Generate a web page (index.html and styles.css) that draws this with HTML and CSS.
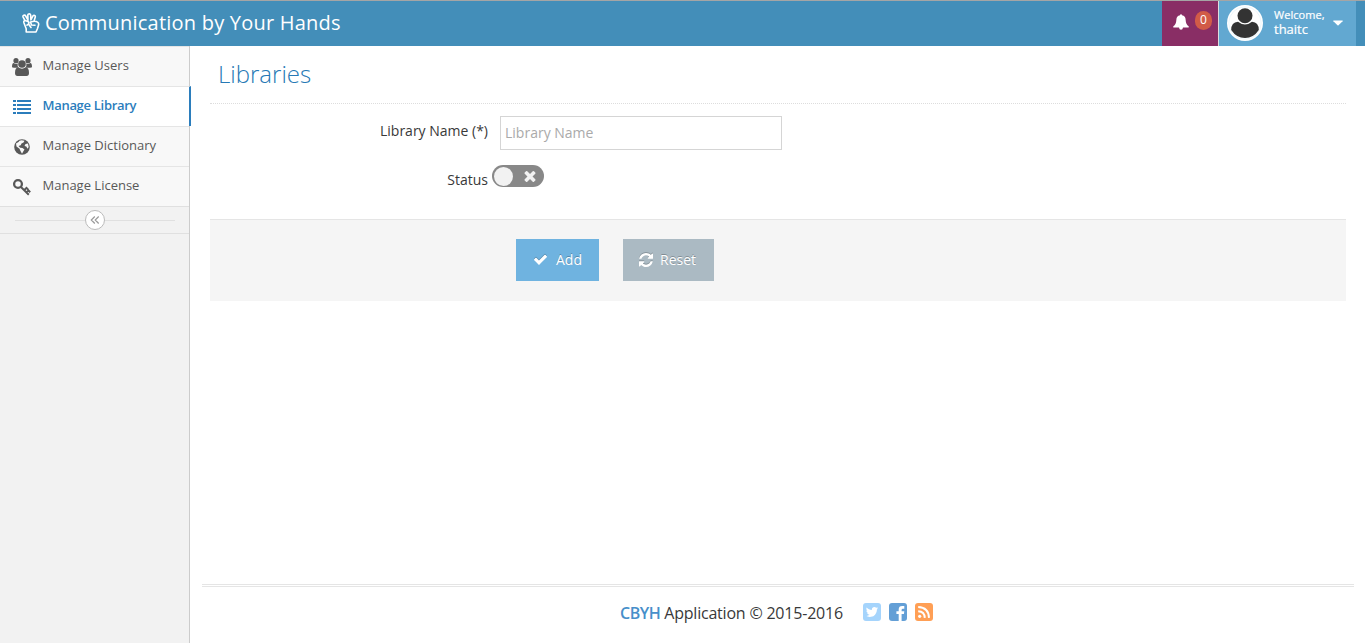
FILE: index.html
```html
<!DOCTYPE html>
<html lang="en">
<head>
<meta charset="utf-8">
<title>Communication by Your Hands</title>
<link rel="stylesheet" href="styles.css">
</head>
<body>
<header class="navbar">
  <div class="brand">
    <svg class="brand-icon" viewBox="0 0 18 20" fill="none" stroke="#fff" stroke-width="1.600" stroke-linejoin="round" stroke-linecap="round"><path d="M4.200 19V15.700L2 10Q1.300 8 3 7.500L1.100 4.100Q.6 2.700 1.800 2.200Q3 1.800 3.700 3L6 7.200L5.800 2Q6 .8 7.400.8Q8.700.9 8.700 2.200L8.900 7L10.900 3Q11.600 2 12.600 2.400Q13.600 2.900 13.200 4.200L12 8.300Q14.500 8.200 16 9.500Q17 10.500 16.500 12.200L15.500 15.500L14 19ZM3 7.500L6 8.500Q7.500 9.500 6.500 11L5 12.200M12 8.300L8.500 9L9.500 12L13 12.300M6.500 11L9 14.500"/></svg>
    <span>Communication by Your Hands</span>
  </div>
  <div class="tools">
    <div class="alerts">
      <svg class="bell" viewBox="0 0 16 16" fill="#fff"><path d="M8 .2Q9 .2 9 1.300Q12.600 2 12.600 5.500Q12.800 10.500 15.700 12.300V13.400H10Q9.700 15.700 8 15.700Q6.300 15.700 6 13.400H.3V12.300Q3.200 10.500 3.400 5.500Q3.400 2 7 1.300Q7 .2 8 .2Z"/></svg>
      <span class="badge">0</span>
    </div>
    <div class="user">
      <svg class="avatar" viewBox="0 0 36 36"><circle cx="18" cy="18" r="18" fill="#fff"/><circle cx="18" cy="18" r="16.200" fill="none" stroke="#d9edf7" stroke-width=".5"/><circle cx="18" cy="10.700" r="7.500" fill="#333"/><path d="M4.200 25Q4.200 17 11 16.700Q18 22.300 25 16.700Q31.800 17 31.800 25Q26.500 33 18 33Q9.500 33 4.200 25Z" fill="#333"/></svg>
      <span class="welcome"><small>Welcome,</small>thaitc</span>
      <svg class="caret" viewBox="0 0 10 6" fill="#fff"><path d="M.5.500H9.500Q10 .7 9.600 1.200L5.500 5.300Q5 5.700 4.500 5.300L.4 1.200Q0 .7.500.5Z"/></svg>
    </div>
  </div>
</header>
<div class="body">
  <nav class="sidebar">
    <a class="item"><svg viewBox="0 0 20 18" fill="currentColor"><circle cx="4" cy="2.700" r="2.600"/><circle cx="16" cy="2.700" r="2.600"/><path d="M0 9Q0 5 1.700 5Q4 6.500 5.700 5.500Q5.200 8 6.500 9.700H2Q0 9.700 0 9ZM20 9Q20 5 18.300 5Q16 6.500 14.300 5.500Q14.800 8 13.500 9.700H18Q20 9.700 20 9Z"/><circle cx="10" cy="6" r="3.800"/><path d="M3 15Q3 9.500 6.300 9.300Q10 12 13.700 9.300Q17 9.500 17 15Q17 18 14.500 18H5.500Q3 18 3 15Z"/></svg><span>Manage Users</span></a>
    <a class="item active"><svg viewBox="0 0 20 18" fill="currentColor"><path d="M1 2h3v2H1zM5 2h14v2H5zM1 6h3v2H1zM5 6h14v2H5zM1 10h3v2H1zM5 10h14v2H5zM1 14h3v2H1zM5 14h14v2H5z"/></svg><span>Manage Library</span></a>
    <a class="item"><svg viewBox="0 0 20 18"><circle cx="10" cy="9" r="7.800" fill="#585858"/><path d="M9.500 2.300L12.500 2.700L11.500 4.500L9.500 5.500L8.700 7.300L6.500 8L8.200 9.700L10.500 10L12.500 11.500L11.500 13L10 15.800L8.500 13L7.500 10.700L4.500 8.500L4 5.500L6.500 4L7.500 2.800ZM13.500 6L16 5.500L16.700 9L15.500 10.800L14.300 8.500L12.500 8Z" fill="#f8f8f8"/></svg><span>Manage Dictionary</span></a>
    <a class="item"><svg viewBox="0 0 20 18" fill="none" stroke="currentColor"><circle cx="6" cy="6" r="3.900" stroke-width="2.300"/><path d="M8.700 8.800L16.800 16.700M12.200 12.200L14.500 9.900L16.200 11.600M14.500 14.500L16.500 12.500L18.200 14.200" stroke-width="2"/></svg><span>Manage License</span></a>
    <div class="collapse"><span class="collapse-button"><svg viewBox="0 0 10 10" fill="none" stroke="#999" stroke-width="1.200"><path d="M4.800 1.500L1.300 5L4.800 8.500M8.700 1.500L5.200 5L8.700 8.500"/></svg></span></div>
  </nav>
  <main class="main">
    <h1 class="title">Libraries</h1>
    <form class="form">
      <div class="row name-row">
        <label class="label" for="name">Library Name (*)</label>
        <input class="field" id="name" type="text" placeholder="Library Name">
      </div>
      <div class="row status-row">
        <span class="label">Status</span>
        <span class="switch"><span class="knob"></span><svg viewBox="250 250 1292 1292" fill="#f2f2f2"><path d="M1490 1322q0 40-28 68l-136 136q-28 28-68 28t-68-28l-294-294-294 294q-28 28-68 28t-68-28l-136-136q-28-28-28-68t28-68l294-294-294-294q-28-28-28-68t28-68l136-136q28-28 68-28t68 28l294 294 294-294q28-28 68-28t68 28l136 136q28 28 28 68t-28 68l-294 294 294 294q28 28 28 68z"/></svg></span>
      </div>
      <div class="actions">
        <button class="button add" type="button"><svg viewBox="0 0 1792 1792" fill="#fff"><path d="M1671 566q0 40-28 68l-724 724-136 136q-28 28-68 28t-68-28l-136-136-362-362q-28-28-28-68t28-68l136-136q28-28 68-28t68 28l294 295 656-657q28-28 68-28t68 28l136 136q28 28 28 68z"/></svg><span>Add</span></button>
        <button class="button reset" type="button"><svg viewBox="128 128 1536 1536" fill="#fff"><path d="M1639 1056q0 5-1 7-64 268-268 434.500t-478 166.500q-146 0-282.500-55t-243.500-157l-129 129q-19 19-45 19t-45-19-19-45v-448q0-26 19-45t45-19h448q26 0 45 19t19 45-19 45l-137 137q71 66 161 102t187 36q134 0 250-65t186-179q11-17 53-117 8-23 30-23h192q13 0 22.500 9.500t9.500 22.500zm25-800v448q0 26-19 45t-45 19h-448q-26 0-45-19t-19-45 19-45l138-138q-148-137-349-137-134 0-250 65t-186 179q-11 17-53 117-8 23-30 23h-199q-13 0-22.500-9.500t-9.500-22.500v-7q65-268 270-434.500t480-166.500q146 0 284 55.500t245 156.500l130-129q19-19 45-19t45 19 19 45z"/></svg><span>Reset</span></button>
      </div>
    </form>
    <footer class="footer">
      <span class="copyright"><b>CBYH</b> Application © 2015-2016</span>
      <span class="social">
        <svg viewBox="0 0 18 18"><rect width="18" height="18" rx="3" fill="#a5d4fc"/><path transform="translate(2 2) scale(.0078)" fill="#fff" d="M1684 408q-67 98-162 167 1 14 1 42 0 130-38 259.500t-115.500 248.500-184.500 210.500-258 146-323 54.500q-271 0-496-145 35 4 78 4 225 0 401-138-105-2-188-64.500t-114-159.500q33 5 61 5 43 0 85-11-112-23-185.500-111.500t-73.500-205.500v-4q68 38 146 41-66-44-105-115t-39-154q0-88 44-163 121 149 294.500 238.500t371.500 99.500q-8-38-8-74 0-134 94.500-228.500t228.500-94.500q140 0 236 102 109-21 205-78-37 115-142 178 93-10 186-50z"/></svg>
        <svg viewBox="0 0 18 18"><rect width="18" height="18" rx="3" fill="#639fd6"/><path fill="#fff" d="M9.700 18V11H7.400V8.200H9.700V6.300Q9.700 2.900 13.100 2.900H15.300V5.700H13.900Q12.600 5.700 12.600 7V8.200H15.300L14.900 11H12.600V18Z"/></svg>
        <svg viewBox="0 0 18 18"><rect width="18" height="18" rx="3" fill="#ff9f55"/><circle cx="4.700" cy="13.300" r="1.600" fill="#fff"/><path d="M3.200 8.200Q9.600 8.500 9.800 14.900M3.200 4Q13.600 4.400 14 14.900" fill="none" stroke="#fff" stroke-width="2"/></svg>
      </span>
    </footer>
  </main>
</div>
</body>
</html>
```
FILE: styles.css
```css
* { box-sizing: border-box; }
body { margin: 0; height: 643px; display: flex; flex-direction: column; overflow: hidden; background: #fff; color: #393939; font: 13px/20px "Open Sans", sans-serif; }
svg { display: block; flex: none; }
.navbar { height: 46px; flex: none; display: flex; justify-content: space-between; background: #438eb9; border-top: 1px solid #a5a5a5; padding: 0 9px 0 22px; color: #fff; }
.brand { display: flex; align-items: center; gap: 5px; font-size: 20px; line-height: 20px; letter-spacing: .22px; white-space: nowrap; height: 43px; }
.brand-icon { width: 18px; height: 20px; }
.tools { display: flex; }
.alerts { width: 56px; background: #892e65; display: flex; padding: 10px 0 0 11px; }
.bell { width: 16px; height: 16px; margin-top: 3px; }
.badge { margin-left: 6px; width: 17px; height: 19px; border-radius: 9px; background: #d15b47; font-size: 12px; line-height: 18px; text-align: center; }
.user { width: 138px; border-left: 1px solid #ddd; background: #62a8d1; display: flex; align-items: flex-start; padding: 4px 0 0 8px; }
.avatar { width: 36px; height: 36px; }
.welcome { width: 60px; margin: 3px 0 0 11px; line-height: 15px; font-size: 13px; -webkit-text-stroke: .2px #fff; }
.welcome small { display: block; font-size: 11px; line-height: 14px; letter-spacing: .05px; }
.caret { width: 10px; height: 6px; margin-top: 15px; margin-left: -1px; }
.body { flex: 1; display: flex; min-height: 0; }
.sidebar { width: 190px; flex: none; background: #f2f2f2; border-right: 1px solid #ccc; }
.item { height: 40px; display: flex; align-items: center; gap: 11px; padding-left: 12px; background: #f8f8f8; border-top: 1px solid #e5e5e5; color: #585858; }
.item svg { width: 20px; height: 18px; }
.item span { margin: -3px 0 0 -.5px; }
.item.active { margin-right: -2px; border-right: 2px solid #2b7dbc; background: #fff; color: #2b7dbc; font-weight: 600; letter-spacing: -.3px; }
.collapse { height: 28px; border: solid #e0e0e0; border-width: 1px 0; display: flex; align-items: center; justify-content: center; }
.collapse::before, .collapse::after { content: ""; width: 70px; height: 1px; background: #e0e0e0; }
.collapse-button { width: 20px; height: 20px; border: 1px solid #bbb; border-radius: 50%; background: #fff; display: flex; align-items: center; justify-content: center; }
.collapse-button svg { width: 10px; height: 10px; }
.main { flex: 1; display: flex; flex-direction: column; padding: 0 11px 0 12px; }
.title { margin: 0 8px; height: 58px; padding: 13px 8px 0; border-bottom: 1px dotted #ddd; font-size: 24px; line-height: 29px; font-weight: 300; color: #2679b5; }
.form { margin: 0 8px; font-size: 14px; }
.row { display: flex; }
.label { width: 278px; text-align: right; }
.name-row { height: 61px; padding-top: 12px; gap: 12px; }
.name-row .label { padding-top: 5px; }
.field { width: 282px; height: 34px; border: 1px solid #d5d5d5; padding: 4px 4px 6px; font: 14px "Open Sans", sans-serif; }
.field::placeholder { color: #aaa; }
.status-row { height: 54px; gap: 4px; }
.status-row .label { padding-top: 5px; }
.switch { width: 52px; height: 22px; border-radius: 11px; background: #888; display: flex; align-items: center; gap: 11px; padding-left: 2px; }
.knob { width: 19px; height: 19px; border-radius: 50%; background: #f2f2f2; }
.switch svg { width: 12px; height: 12px; }
.actions { height: 82px; background: #f5f5f5; border-top: 1px solid #e5e5e5; display: flex; gap: 24px; padding: 19px 0 0 306px; }
.button { height: 42px; border: 0; display: flex; align-items: center; justify-content: center; gap: 7px; color: #fff; font: 14px/20px "Open Sans", sans-serif; text-shadow: 0 -1px 0 rgba(0,0,0,.25); padding: 0; }
.button svg { width: 15px; height: 15px; filter: drop-shadow(0 -1px 0 rgba(0,0,0,.2)); }
.add { width: 83px; gap: 8px; background: #6fb3e0; }
.add svg { margin-top: -1px; }
.reset { width: 91px; background: #abbac3; padding-right: 2px; }
.reset svg { width: 14px; height: 14px; }
.footer { margin-top: auto; height: 59px; border-top: 3px double #e5e5e5; display: flex; justify-content: center; gap: 20px; padding: 16px 3px 0 0; font-size: 16px; line-height: 24px; }
.copyright { margin-top: -2px; letter-spacing: -.21px; }
.copyright b { color: #478fca; font-weight: 600; letter-spacing: -.5px; }
.social { display: flex; gap: 8px; }
.social svg { width: 18px; height: 18px; }
```
